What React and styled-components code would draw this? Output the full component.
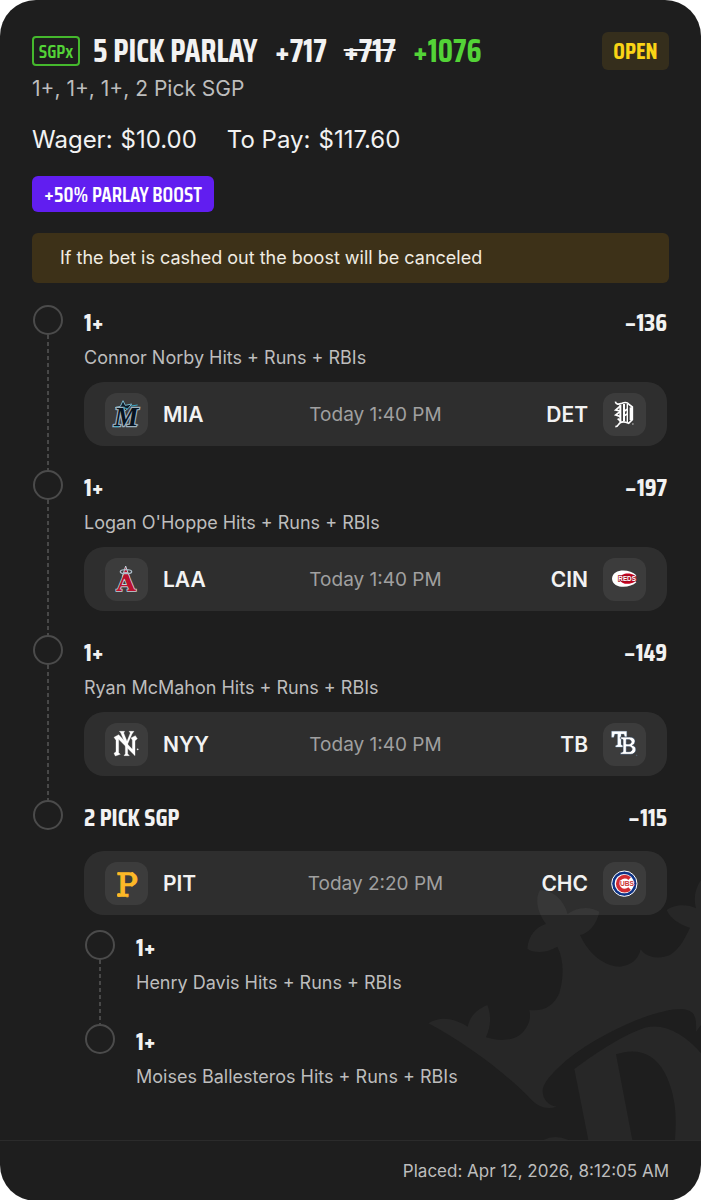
import React from "react";
import styled, { createGlobalStyle } from "styled-components";

const GlobalStyle = createGlobalStyle`
  *, *::before, *::after { box-sizing: border-box; }
  body { margin: 0; background: #fff; font-family: Inter, "Liberation Sans", sans-serif; }
  h1, h2, h3, p, ol, dl, dd, dt { margin: 0; padding: 0; }
  ol { list-style: none; }
`;

const display = `"Saira Condensed", "Liberation Sans Narrow", "Roboto Condensed", Inter, sans-serif`;

const Slip = styled.article`
  min-height: 100vh;
  display: flex;
  flex-direction: column;
  overflow: hidden;
  border-radius: 36px;
  background: #1e1e1e;
  color: #f2f2f2;
`;

const Body = styled.div`
  position: relative;
  isolation: isolate;
  flex: 1;
  padding: 32px 32px 46px;
`;

const Watermark = styled.svg`
  position: absolute;
  z-index: -1;
  right: 0;
  bottom: 0;
  width: 301px;
  height: 280px;
  fill: #272727;
`;

const Header = styled.header`
  display: flex;
  align-items: center;
  height: 38px;
`;

const SgpTag = styled.span`
  display: flex;
  align-items: center;
  justify-content: center;
  width: 48px;
  height: 30px;
  margin-right: 13px;
  border: 2px solid #45b82d;
  border-radius: 4px;
  color: #53d337;
  font: 600 19px ${display};
`;

const Title = styled.h1`
  margin-right: 17px;
  font: 700 32px/38px ${display};
`;

const Odds = styled.span`
  margin-right: 17px;
  color: ${(p) => (p.$boosted ? "#53d337" : "#f2f2f2")};
  font: 700 32px/38px ${display};
`;

const OldOdds = styled(Odds).attrs({ as: "s" })`
  text-decoration-thickness: 2px;
`;

const Status = styled.span`
  display: flex;
  align-items: center;
  justify-content: center;
  width: 67px;
  height: 38px;
  margin-left: auto;
  border-radius: 6px;
  background: #352e1c;
  color: #fad416;
  font: 700 23px ${display};
`;

const Summary = styled.p`
  color: #bdbdbd;
  font-size: 21px;
  line-height: 38px;
`;

const Amounts = styled.dl`
  display: flex;
  gap: 30px;
  margin-top: 14px;
  font-size: 24px;
  line-height: 36px;
`;

const Amount = styled.div`
  display: flex;
  gap: 8px;
`;

const Boost = styled.span`
  display: flex;
  align-items: center;
  justify-content: center;
  width: 182px;
  height: 36px;
  margin-top: 18px;
  border-radius: 6px;
  background: #611ef0;
  color: #fff;
  font: 600 21px ${display};
`;

const Notice = styled.p`
  margin: 21px 0 22px;
  padding: 0 28px;
  border-radius: 6px;
  background: #3d3118;
  color: #f0ece2;
  font-size: 18px;
  line-height: 50px;
`;

const LegList = styled.ol`
  padding-right: ${(p) => (p.$nested ? 0 : 2)}px;
  padding-top: ${(p) => (p.$nested ? 15 : 0)}px;
`;

const LegItem = styled.li`
  display: flex;
  gap: 20px;
`;

const Rail = styled.div`
  display: flex;
  flex-direction: column;
  align-items: center;
  flex: 0 0 32px;
`;

const Marker = styled.span`
  width: 30px;
  height: 30px;
  border: 2px solid #4b4b4b;
  border-radius: 50%;
`;

const Thread = styled.span`
  flex: 1;
  width: 2px;
  background: repeating-linear-gradient(#484848 0 4px, transparent 4px 7px);
`;

const LegContent = styled.div`
  flex: 1;
  min-width: 0;
  padding-bottom: ${(p) => (p.$last ? 0 : 24)}px;
`;

const LegHead = styled.div`
  display: flex;
  justify-content: space-between;
  font: 700 25px/36px ${display};
`;

const LegTitle = styled.h2`
  font: inherit;
`;

const Detail = styled.p`
  color: #bdbdbd;
  font-size: 18px;
  line-height: 34px;
`;

const Game = styled.div`
  display: grid;
  grid-template-columns: 1fr auto 1fr;
  align-items: center;
  min-height: 64px;
  margin-top: ${(p) => (p.$spaced ? 15 : 7)}px;
  padding: 0 21px;
  border-radius: 20px;
  background: rgba(255, 255, 255, 0.075);
`;

const Team = styled.span`
  display: flex;
  flex-direction: ${(p) => (p.$home ? "row-reverse" : "row")};
  align-items: center;
  gap: 15px;
  font-size: 21px;
  font-weight: 600;
`;

const Badge = styled.span`
  width: 43px;
  height: 43px;
  border-radius: 12px;
  background: rgba(255, 255, 255, 0.07);
`;

const Logo = styled.svg`
  display: block;
  width: 43px;
  height: 43px;
`;

const StartTime = styled.time`
  color: #a0a0a0;
  font-size: 19px;
`;

const Footer = styled.footer`
  padding: 0 32px;
  border-top: 1px solid #2b2b2b;
  color: #bdbdbd;
  font-size: 17px;
  line-height: 60px;
  text-align: right;
`;

const serif = `"DejaVu Serif", "Liberation Serif", serif`;

const logos = {
  MIA: (
    <g>
      <path d="M30 44 L46 40 L54 23 L61 37 L80 33 L70 46 L54 58 L50 50Z" fill="#0b1a28" stroke="#79b7cb" strokeWidth="3" />
      <text x="27" y="98" fontFamily="Liberation Serif, serif" fontWeight="700" fontStyle="italic" fontSize="82" fill="#06131f" stroke="#9fb2bf" strokeWidth="7" paintOrder="stroke">M</text>
      <path d="M54 44 L68 47 M78 39 L98 36 M28 101 H42" fill="none" stroke="#38a8c8" strokeWidth="3" />
      <circle cx="98" cy="96" r="2" fill="#9fb2bf" />
    </g>
  ),
  DET: (
    <g fill="none" stroke="#fff">
      <path d="M37 26 C39 35 47 35 57 31 C66 27 74 29 78 34 L88 42 V80 L77 91 C62 84 51 87 47 94 C44 99 40 101 37 101" strokeWidth="5" />
      <path d="M85 43 V81" strokeWidth="10" />
      <path d="M52 36 V86 M63 33 V85" strokeWidth="6" />
      <path d="M73 32 V88" strokeWidth="4" />
      <path d="M53 38 L38 51 L51 54 M52 55 L38 66 L51 70 M44 77 L54 86 M63 55 L73 49 M63 68 L73 63" strokeWidth="5" />
      <path d="M87 93 H92" strokeWidth="2" />
    </g>
  ),
  LAA: (
    <g>
      <path d="M62 24 L52 56 H73Z" fill="#ba112d" stroke="#c5cfd8" strokeWidth="3" />
      <text x="63" y="99" textAnchor="middle" fontFamily={serif} fontSize="74" fontWeight="700" fill="#ba112d" stroke="#c5cfd8" strokeWidth="5" paintOrder="stroke">A</text>
      <path d="M58 48 H68 L73 62 H53Z" fill="#ba112d" />
      <ellipse cx="63" cy="41" rx="17" ry="6" fill="none" stroke="#aebdc9" strokeWidth="4" />
    </g>
  ),
  CIN: (
    <g>
      <path d="M100 52 C80 32 29 31 27 62 C29 93 80 92 100 73 L94 66 V59Z" fill="#fff" />
      <path d="M94 52 C80 43 54 44 49 62 C54 80 80 81 94 72Z" fill="#c6011f" />
      <text x="46" y="69" fontFamily="Liberation Sans, sans-serif" fontSize="19" fontWeight="700" fill="#fff" stroke="#a00d20" strokeWidth="4" paintOrder="stroke">REDS</text>
    </g>
  ),
  NYY: (
    <g fill="#fff" stroke="#fff" strokeLinejoin="round">
      <path d="M43 25 H59 L56 30 L66 55 L76 30 L72 25 H87 C84 29 82 31 80 35 L68 63 V92 L73 98 H57 L61 92 V63 L49 34 C48 30 46 28 43 25Z" strokeWidth="1" />
      <path d="M27 43 L41 35 L82 79 V51 L78 45 L91 38 L97 47 L90 53 V98 L41 49 V89 L46 94 L31 99 L27 91 L33 86 V52Z" strokeWidth="1" />
      <circle cx="98" cy="79" r="2" />
    </g>
  ),
  TB: (
    <g stroke="#8fbce6" strokeWidth="1">
      <path d="M26 25 H71 V43 H66 L63 33 H54 V65 L60 68 V72 H38 V68 L44 65 V33 H35 L32 43 H26Z" fill="#fff" />
      <path fillRule="evenodd" d="M52 42 H80 C99 42 101 61 88 67 C105 71 101 94 83 94 H52 V89 L60 86 V50 L52 47Z M70 50 V63 H78 C87 62 87 51 78 50Z M70 71 V86 H79 C90 85 90 72 79 71Z" fill="#fff" stroke="#2b3d55" strokeWidth="2" />
      <circle cx="101" cy="97" r="1" />
    </g>
  ),
  PIT: (
    <g fill="#fdb827">
      <text x="34" y="101" fontFamily={serif} fontSize="96" fontWeight="400" stroke="#fdb827" strokeWidth="4">P</text>
      <circle cx="41" cy="35" r="4" />
      <circle cx="42" cy="99" r="6" />
      <circle cx="56" cy="98" r="5" />
      <circle cx="82" cy="34" r="4" />
      <circle cx="89" cy="43" r="4" />
      <circle cx="89" cy="61" r="4" />
      <circle cx="81" cy="70" r="4" />
      <path d="M64 103 H70 V106 H64Z" />
    </g>
  ),
  CHC: (
    <g>
      <circle cx="64" cy="65" r="38" fill="#0e3386" stroke="#fff" strokeWidth="3" />
      <circle cx="64" cy="65" r="29" fill="#fff" />
      <path d="M80 50 A21 21 0 1 0 80 80" fill="none" stroke="#d22c32" strokeWidth="11" />
      <text x="72" y="73" textAnchor="middle" fontFamily="Liberation Sans, sans-serif" fontSize="20" fontWeight="700" fill="#cc3433" stroke="#fff" strokeWidth="3" paintOrder="stroke">UBS</text>
    </g>
  ),
};

function TeamSide({ code, home }) {
  return (
    <Team $home={home}>
      <Badge>
        <Logo viewBox="0 0 129 129" aria-hidden="true">{logos[code]}</Logo>
      </Badge>
      {code}
    </Team>
  );
}

function Leg({ leg, last, nested }) {
  return (
    <LegItem>
      <Rail>
        <Marker />
        {!last && <Thread />}
      </Rail>
      <LegContent $last={last}>
        <LegHead>
          <LegTitle as={nested ? "h3" : "h2"}>{leg.title}</LegTitle>
          {leg.odds && <span>{leg.odds}</span>}
        </LegHead>
        {leg.detail && <Detail>{leg.detail}</Detail>}
        {leg.away && (
          <Game $spaced={!leg.detail}>
            <TeamSide code={leg.away} />
            <StartTime>{leg.time}</StartTime>
            <TeamSide code={leg.home} home />
          </Game>
        )}
        {leg.picks && <Legs items={leg.picks} nested />}
      </LegContent>
    </LegItem>
  );
}

function Legs({ items, nested }) {
  return (
    <LegList $nested={nested}>
      {items.map((leg, i) => (
        <Leg key={i} leg={leg} last={i === items.length - 1} nested={nested} />
      ))}
    </LegList>
  );
}

const legs = [
  { title: "1+", odds: "−136", detail: "Connor Norby Hits + Runs + RBIs", away: "MIA", home: "DET", time: "Today 1:40 PM" },
  { title: "1+", odds: "−197", detail: "Logan O'Hoppe Hits + Runs + RBIs", away: "LAA", home: "CIN", time: "Today 1:40 PM" },
  { title: "1+", odds: "−149", detail: "Ryan McMahon Hits + Runs + RBIs", away: "NYY", home: "TB", time: "Today 1:40 PM" },
  {
    title: "2 PICK SGP",
    odds: "−115",
    away: "PIT",
    home: "CHC",
    time: "Today 2:20 PM",
    picks: [
      { title: "1+", detail: "Henry Davis Hits + Runs + RBIs" },
      { title: "1+", detail: "Moises Ballesteros Hits + Runs + RBIs" },
    ],
  },
];

export default function App() {
  return (
    <>
      <GlobalStyle />
      <Slip>
        <Body>
          <Watermark viewBox="0 0 903 840" aria-hidden="true">
            <path d="M85 490 C120 468 160 473 203 500 C208 475 225 450 262 435 C275 470 272 500 258 532 C300 545 345 543 370 515 C390 490 393 470 388 450 C430 455 460 440 478 400 C492 350 492 300 472 260 C440 280 400 280 382 266 C385 225 410 200 438 192 C410 155 405 115 420 90 C455 90 490 115 503 162 C530 140 570 138 598 155 C590 195 565 220 540 225 C570 290 620 320 660 320 C690 318 715 300 722 268 C740 295 780 298 810 285 C840 265 855 235 870 203 C840 195 810 175 800 150 C820 135 860 130 888 145 C880 115 885 85 903 60 V495 L888 515 C890 470 885 450 845 447 C760 447 600 520 500 600 C450 645 428 670 428 695 C430 720 445 735 470 740 C440 750 415 740 395 720 C330 650 200 550 85 490Z" />
            <path fillRule="evenodd" d="M523 627 C600 570 680 520 740 502 C800 490 860 530 903 580 V840 H565Z M648 583 C700 565 760 570 795 640 C830 710 830 780 825 840 H697Z" />
            <path d="M430 840 Q465 822 505 840Z" />
          </Watermark>
          <Header>
            <SgpTag>SGPx</SgpTag>
            <Title>5 PICK PARLAY</Title>
            <Odds>+717</Odds>
            <OldOdds>+717</OldOdds>
            <Odds $boosted>+1076</Odds>
            <Status>OPEN</Status>
          </Header>
          <Summary>1+, 1+, 1+, 2 Pick SGP</Summary>
          <Amounts>
            <Amount>
              <dt>Wager:</dt>
              <dd>$10.00</dd>
            </Amount>
            <Amount>
              <dt>To Pay:</dt>
              <dd>$117.60</dd>
            </Amount>
          </Amounts>
          <Boost>+50% PARLAY BOOST</Boost>
          <Notice>If the bet is cashed out the boost will be canceled</Notice>
          <Legs items={legs} />
        </Body>
        <Footer>Placed: Apr 12, 2026, 8:12:05 AM</Footer>
      </Slip>
    </>
  );
}
